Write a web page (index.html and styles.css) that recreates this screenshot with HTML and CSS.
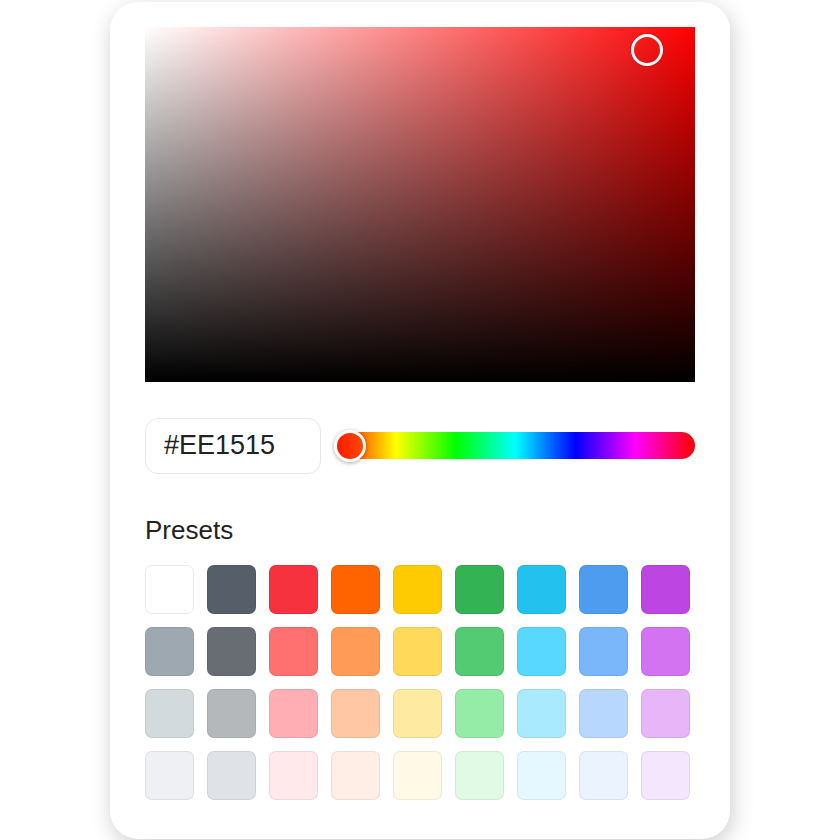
FILE: index.html
```html
<!DOCTYPE html>
<html lang="en">
  <head>
    <meta charset="UTF-8" />
    <meta name="viewport" content="width=device-width, initial-scale=1.0" />
    <title>Color Picker</title>
    <link rel="stylesheet" href="styles.css">
  </head>

  <body>
    <div class="picker">
      <div class="sat-area">
        <div class="sat-knob"></div>
      </div>

      <div class="controls">
        <input class="hex-input" type="text" value="#EE1515" />
        <div class="hue-track">
          <div class="hue-knob"></div>
        </div>
      </div>

      <h2 class="presets-title">Presets</h2>
      <div class="presets">
        <button class="swatch" style="background:#ffffff;border-color:#e6e8eb"></button>
        <button class="swatch" style="background:#565e69"></button>
        <button class="swatch" style="background:#f6323e"></button>
        <button class="swatch" style="background:#ff6400"></button>
        <button class="swatch" style="background:#fecb02"></button>
        <button class="swatch" style="background:#33b354"></button>
        <button class="swatch" style="background:#23c2ee"></button>
        <button class="swatch" style="background:#4e9cf0"></button>
        <button class="swatch" style="background:#bd46e3"></button>

        <button class="swatch" style="background:#9da8b1"></button>
        <button class="swatch" style="background:#686d74"></button>
        <button class="swatch" style="background:#ff7171"></button>
        <button class="swatch" style="background:#ff9a57"></button>
        <button class="swatch" style="background:#ffda5a"></button>
        <button class="swatch" style="background:#52cb72"></button>
        <button class="swatch" style="background:#58d8ff"></button>
        <button class="swatch" style="background:#79b6fa"></button>
        <button class="swatch" style="background:#d373f2"></button>

        <button class="swatch" style="background:#d2dadd"></button>
        <button class="swatch" style="background:#b4b8bb"></button>
        <button class="swatch" style="background:#ffafb4"></button>
        <button class="swatch" style="background:#ffc7a3"></button>
        <button class="swatch" style="background:#feeaa0"></button>
        <button class="swatch" style="background:#95eca7"></button>
        <button class="swatch" style="background:#a9eaff"></button>
        <button class="swatch" style="background:#b7d7fe"></button>
        <button class="swatch" style="background:#e7b5f8"></button>

        <button class="swatch" style="background:#eff0f4"></button>
        <button class="swatch" style="background:#dfe2e6"></button>
        <button class="swatch" style="background:#ffe9ea"></button>
        <button class="swatch" style="background:#ffeee5"></button>
        <button class="swatch" style="background:#fff9e6"></button>
        <button class="swatch" style="background:#e1fae5"></button>
        <button class="swatch" style="background:#e6f8ff"></button>
        <button class="swatch" style="background:#ebf3ff"></button>
        <button class="swatch" style="background:#f4e6fc"></button>
      </div>
    </div>
  </body>
</html>
```

FILE: styles.css
```css
body {
  margin: 0;
  min-height: 840px;
  background-color: #ffffff;
  font-family: "Liberation Sans", Arial, sans-serif;
  display: flex;
  justify-content: center;
  align-items: center;
}

.picker {
  box-sizing: border-box;
  width: 620px;
  padding: 25px 35px 39px;
  background-color: #ffffff;
  border-radius: 28px;
  box-shadow: 2px 6px 22px rgba(0, 0, 0, 0.2);
}

.sat-area {
  position: relative;
  height: 355px;
  background:
    linear-gradient(to bottom, rgba(0, 0, 0, 0), #000000),
    linear-gradient(to right, #ffffff, #ff0000);
}

.sat-knob {
  position: absolute;
  left: 91.2%;
  top: 6.7%;
  width: 26px;
  height: 26px;
  border: 3px solid #ffffff;
  border-radius: 50%;
  transform: translate(-50%, -50%);
  box-shadow: 0 0 2px rgba(0, 0, 0, 0.3);
}

.controls {
  display: flex;
  align-items: center;
  gap: 15px;
  margin-top: 36px;
}

.hex-input {
  box-sizing: border-box;
  width: 176px;
  height: 56px;
  padding: 0 0 0 18px;
  border: 1px solid #e6e7ea;
  border-radius: 13px;
  font-family: "Liberation Sans", Arial, sans-serif;
  font-size: 27px;
  color: #222222;
  outline: none;
}

.hue-track {
  position: relative;
  flex: 1;
  height: 27px;
  border-radius: 14px;
  background: linear-gradient(to right, #ff0000, #ffff00, #00ff00, #00ffff, #0000ff, #ff00ff, #ff0000);
}

.hue-knob {
  position: absolute;
  left: 14px;
  top: 50%;
  width: 26px;
  height: 26px;
  border: 3px solid #ffffff;
  border-radius: 50%;
  transform: translate(-50%, -50%);
  background: linear-gradient(to right, #ff1a00, #ff4a00);
  box-shadow: 0 1px 4px rgba(0, 0, 0, 0.35);
}

.presets-title {
  margin: 41px 0 0;
  font-size: 26px;
  font-weight: normal;
  color: #222222;
}

.presets {
  display: grid;
  grid-template-columns: repeat(9, 49px);
  gap: 13px;
  margin-top: 19px;
}

.swatch {
  width: 49px;
  height: 49px;
  padding: 0;
  border: 1px solid rgba(0, 0, 0, 0.07);
  border-radius: 7px;
  cursor: pointer;
}
```
